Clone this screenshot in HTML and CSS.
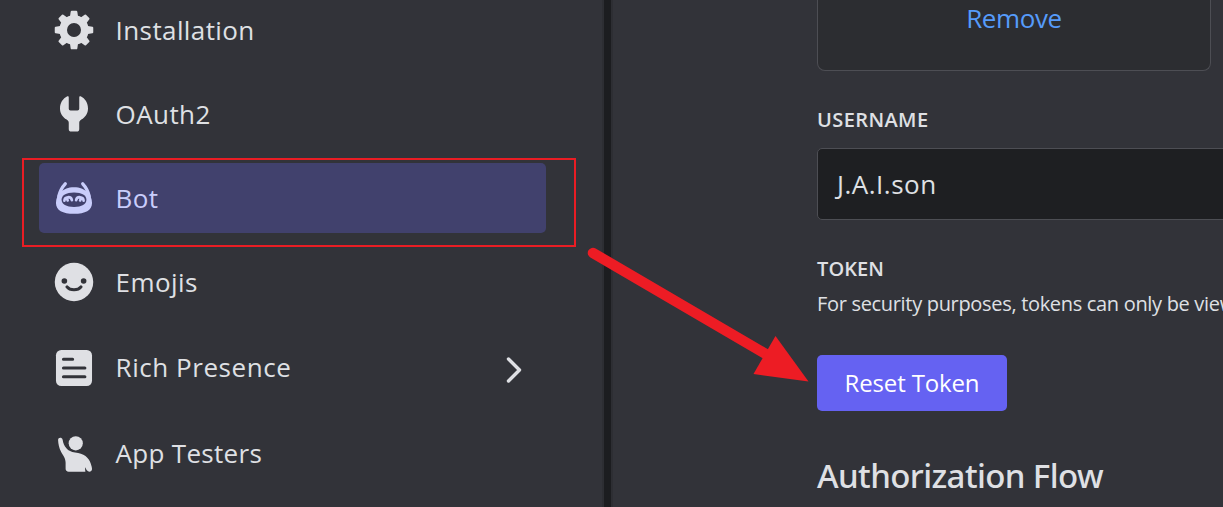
FILE: index.html
```html
<!DOCTYPE html>
<html lang="en">
<head>
<meta charset="utf-8">
<title>Bot settings</title>
<link rel="stylesheet" href="styles.css">
</head>
<body>
<div class="app">
  <nav class="sidebar">
    <a class="item">
      <svg class="icon" viewBox="0 0 24 24"><g fill="currentColor"><path id="t" d="M9.6 5 10.1 1.5Q10.2 1 10.7 1H13.3Q13.8 1 13.9 1.5L14.4 5V19L13.9 22.500Q13.800 23 13.300 23H10.700Q10.200 23 10.100 22.500L9.600 19V15.500H14.400V8.500H9.600Z"/><use href="#t" transform="rotate(45 12 12)"/><use href="#t" transform="rotate(90 12 12)"/><use href="#t" transform="rotate(135 12 12)"/></g><circle cx="12" cy="12" r="6.2" fill="none" stroke="currentColor" stroke-width="4.400"/><circle class="hole" cx="12" cy="12" r="4"/></svg>
      <span class="label l1">Installation</span>
    </a>
    <a class="item">
      <svg class="icon" viewBox="0 0 24 24" fill="currentColor"><path d="M8.200 1.900C8.700 1.700 9 2 9 2.500V9Q9 10 10 10H14Q15 10 15 9V2.500C15 2 15.300 1.700 15.800 1.900C18.400 3.200 20 5.700 20 8.800C20 11.700 18.500 13.700 16.200 15.200C15.400 15.700 15 16.200 15 17V20.500Q15 22 13.500 22H10.500Q9 22 9 20.500V17C9 16.200 8.600 15.700 7.800 15.200C5.500 13.700 4 11.700 4 8.800C4 5.700 5.600 3.200 8.200 1.900Z"/></svg>
      <span class="label l2">OAuth2</span>
    </a>
    <a class="item selected">
      <svg class="icon" viewBox="0 0 24 24"><path d="M7 3.900Q4.300 6.800 3.300 11M17 3.900Q19.700 6.800 20.700 11" fill="none" stroke="currentColor" stroke-width="1.900" stroke-linecap="round"/><path fill="currentColor" d="M12 5.900C15.500 5.900 17.500 6.900 19.500 8.500C21.300 9.900 22.300 12.200 22.300 14.800C22.300 19 18.500 21 12 21S1.700 19 1.700 14.800C1.700 12.200 2.700 9.900 4.500 8.500C6.500 6.900 8.500 5.900 12 5.900Z"/><path class="hole" d="M12 8.900C16.600 8.900 19.100 10.600 19.100 13C19.100 15.500 16.400 17.100 12 17.100S4.900 15.500 4.900 13C4.900 10.600 7.400 8.900 12 8.900Z"/><path d="M6.500 13.600C6.600 11 10.400 10.800 10.800 13.300M13.200 13.300C13.600 10.800 17.400 11 17.500 13.600M8 12.400l.4 1M15.900 12.400l-.4 1" fill="none" stroke="currentColor" stroke-width="1.500" stroke-linecap="round"/></svg>
      <span class="label l3">Bot</span>
    </a>
    <a class="item">
      <svg class="icon" viewBox="0 0 24 24"><circle cx="12" cy="12" r="11" fill="currentColor"/><circle class="hole" cx="6.500" cy="11.400" r="1.600"/><circle class="hole" cx="17.500" cy="11.400" r="1.600"/><path class="cut" d="M8 14.800C9.700 17 14.300 17 16 14.800"/></svg>
      <span class="label l4">Emojis</span>
    </a>
    <a class="item rich">
      <svg class="icon" viewBox="0 0 24 24"><rect x="1.700" y="1.700" width="20.600" height="20.600" rx="3" fill="currentColor"/><path class="cut" d="M6 7H11.200M6 12H18.200M6 17H18.200"/></svg>
      <span class="label l5">Rich Presence</span>
      <svg class="chevron" viewBox="0 0 16 28"><path d="M2.500 3 13.500 14 2.500 25"/></svg>
    </a>
    <a class="item">
      <svg class="icon" viewBox="0 0 24 24" fill="currentColor"><circle cx="13" cy="5.900" r="4.050"/><path d="M2.900 4C2.900 2.500 5.100 2.300 5.500 3.900C6.100 7.700 8.300 10.800 12.600 11.100C17.500 11.500 20.600 14 21.600 17.500Q22.300 19.500 22.300 20.600C22.200 21.900 21 22.500 20 21.900Q18.900 21 18.500 19.500Q18.100 20.600 18.500 22.100H9Q7.200 22.100 7.200 20.300V17C7.200 14.400 5.800 13 4.600 10.700C3.500 8.600 3 6.300 2.900 4Z"/></svg>
      <span class="label l6">App Testers</span>
    </a>
  </nav>
  <div class="divider"></div>
  <main class="content">
    <div class="card"><a class="remove">Remove</a></div>
    <h5 class="field-title username">USERNAME</h5>
    <div class="input">J.A.I.son</div>
    <h5 class="field-title token">TOKEN</h5>
    <p class="hint">For security purposes, tokens can only be viewed</p>
    <button class="reset">Reset Token</button>
    <h2 class="heading">Authorization Flow</h2>
  </main>
  <div class="highlight"></div>
  <svg class="arrow" viewBox="0 0 1223 507"><path d="M593 253 770 356.500" stroke="#ed1c24" stroke-width="10.500" stroke-linecap="round"/><path d="M808.500 381.500 775.500 336 753.500 374Z" fill="#ed1c24"/></svg>
</div>
</body>
</html>
```
FILE: styles.css
```css
* { box-sizing: border-box; margin: 0; padding: 0; }
body { overflow: hidden; background: #323339; font-family: "Open Sans", "Noto Sans", sans-serif; color: #dfe0e4; }
.app { position: relative; display: flex; width: 1223px; height: 507px; overflow: hidden; }

.sidebar { flex: none; width: 602px; margin-top: -5px; padding: 0 56px 0 39px; display: flex; flex-direction: column; gap: 14px; }
.item { --back: #323339; flex: none; height: 70px; display: flex; align-items: center; padding: 0 24px 0 14px; border-radius: 5px; color: #dfe0e4; }
.item.selected { --back: #41416d; background: #41416d; color: #c9cdfb; }
.item.rich { height: 74px; }
.icon { flex: none; width: 42px; height: 42px; margin-right: 20px; }
.hole { fill: var(--back); }
.cut { fill: none; stroke: var(--back); stroke-width: 1.8; stroke-linecap: round; }
.label { font-size: 26px; line-height: 36px; white-space: nowrap; letter-spacing: .4px; padding-left: .6px; }
.l5 { letter-spacing: .55px; padding-bottom: 2px; }
.l6 { padding-bottom: 2px; letter-spacing: .3px; }
.chevron { width: 16px; height: 28px; margin: 4px 0 0 auto; fill: none; stroke: #dfe0e4; stroke-width: 3.4; stroke-linecap: round; stroke-linejoin: round; }

.divider { flex: none; width: 11px; background: #1c1d20; border: solid #2d2e33; border-width: 0 2px; }

.content { flex: none; width: 610px; padding-left: 204px; display: flex; flex-direction: column; align-items: flex-start; white-space: nowrap; }
.card { width: 394px; height: 71px; background: #2c2d31; border: 1px solid #4d4e54; border-top: 0; border-radius: 0 0 8px 8px; text-align: center; }
.remove { display: block; color: #569bfa; font-size: 26px; line-height: 36px; letter-spacing: -.4px; }
.field-title { font-size: 20px; line-height: 24px; font-weight: 600; letter-spacing: .1px; }
.username { margin-top: 37px; letter-spacing: .4px; }
.input { width: 500px; height: 72px; margin-top: 16px; padding-left: 19px; background: #1e1f22; border: 1px solid #4d4e54; border-radius: 5px; font-size: 26px; line-height: 70px; letter-spacing: .5px; }
.token { margin-top: 37px; }
.hint { margin-top: 10px; font-size: 20px; line-height: 26px; letter-spacing: -.32px; }
.reset { width: 190px; height: 56px; margin-top: 38px; border: 0; border-radius: 5px; background: #6562f2; color: #fff; font: 24px/56px "Open Sans", "Noto Sans", sans-serif; letter-spacing: -.15px; }
.heading { margin-top: 42px; font-family: "Noto Sans", sans-serif; font-size: 33px; line-height: 46px; font-weight: 500; letter-spacing: -.6px; }

.highlight { position: absolute; left: 22px; top: 158px; width: 554px; height: 89px; border: 2px solid #e91d24; }
.arrow { position: absolute; left: 0; top: 0; width: 1223px; height: 507px; }
```
